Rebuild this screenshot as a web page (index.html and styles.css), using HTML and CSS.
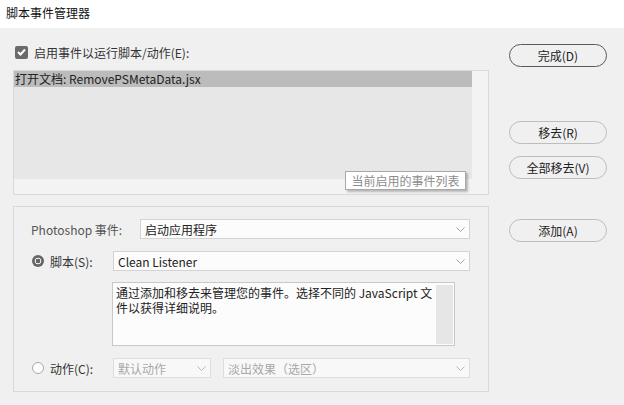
FILE: index.html
```html
<!DOCTYPE html>
<html lang="zh-CN">
<head>
  <meta charset="UTF-8">
  <title>脚本事件管理器</title>
  <link rel="stylesheet" href="styles.css">
</head>
<body>
  <div class="titlebar">脚本事件管理器</div>

  <div class="main">
    <div class="left">
      <div class="check-row">
        <span class="checkbox">
          <svg width="9" height="8" viewBox="0 0 9 8"><polyline points="1,4 3.5,6.5 8,1.5" fill="none" stroke="#fff" stroke-width="2"/></svg>
        </span>
        <span>启用事件以运行脚本/动作(E):</span>
      </div>

      <div class="event-box">
        <div class="event-list">
          <div class="event-item selected">打开文档: RemovePSMetaData.jsx</div>
        </div>
        <div class="tooltip">当前启用的事件列表</div>
      </div>

      <div class="group">
        <div class="row">
          <label class="label-ps">Photoshop 事件:</label>
          <div class="select grow">
            <span>启动应用程序</span>
            <svg class="chev" width="9" height="5" viewBox="0 0 9 5"><polyline points="0.5,0.5 4.5,4.5 8.5,0.5" fill="none" stroke="#a0a0a0"/></svg>
          </div>
        </div>

        <div class="row gap-top">
          <div class="radio-label">
            <span class="radio on"></span>
            <span>脚本(S):</span>
          </div>
          <div class="select grow">
            <span>Clean Listener</span>
            <svg class="chev" width="9" height="5" viewBox="0 0 9 5"><polyline points="0.5,0.5 4.5,4.5 8.5,0.5" fill="none" stroke="#a0a0a0"/></svg>
          </div>
        </div>

        <div class="desc">
          <p>通过添加和移去来管理您的事件。选择不同的 JavaScript 文<br>件以获得详细说明。</p>
          <div class="desc-scroll"></div>
        </div>

        <div class="row gap-top">
          <div class="radio-label">
            <span class="radio"></span>
            <span>动作(C):</span>
          </div>
          <div class="select disabled small">
            <span>默认动作</span>
            <svg class="chev" width="9" height="5" viewBox="0 0 9 5"><polyline points="0.5,0.5 4.5,4.5 8.5,0.5" fill="none" stroke="#b8b8b8"/></svg>
          </div>
          <div class="select disabled grow second">
            <span>淡出效果（选区）</span>
            <svg class="chev" width="9" height="5" viewBox="0 0 9 5"><polyline points="0.5,0.5 4.5,4.5 8.5,0.5" fill="none" stroke="#b8b8b8"/></svg>
          </div>
        </div>
      </div>
    </div>

    <div class="right">
      <button class="btn primary">完成(D)</button>
      <button class="btn b-remove">移去(R)</button>
      <button class="btn b-all">全部移去(V)</button>
      <button class="btn b-add">添加(A)</button>
    </div>
  </div>
</body>
</html>
```

FILE: styles.css
```css
body {
  margin: 0;
  background-color: #f0f0f0;
  font-family: "Noto Sans CJK SC", "Noto Sans", sans-serif;
  font-size: 12px;
  color: #222;
}

.titlebar {
  height: 28px;
  line-height: 26px;
  padding-left: 6px;
  background-color: #fff;
  color: #111;
}

.main {
  display: flex;
  padding-left: 13px;
}

.left {
  width: 476px;
}

/* top checkbox */
.check-row {
  display: flex;
  align-items: center;
  height: 20px;
  margin-top: 14px;
  padding-left: 2px;
  color: #333;
}

.checkbox {
  display: flex;
  align-items: center;
  justify-content: center;
  width: 13px;
  height: 13px;
  border-radius: 2px;
  background-color: #6a6a6a;
  margin-right: 6px;
}

/* event list */
.event-box {
  position: relative;
  height: 123px;
  margin-top: 8px;
  border: 1px solid #d9d9d9;
  background-color: #f3f3f3;
}

.event-list {
  width: 458px;
  height: 108px;
  background-color: #e7e7e7;
}

.event-item {
  height: 16px;
  line-height: 16px;
  padding-left: 1px;
  color: #222;
}

.event-item.selected {
  background-color: #bcbcbc;
}

.tooltip {
  position: absolute;
  left: 331px;
  top: 100px;
  width: 119px;
  height: 17px;
  line-height: 17px;
  text-align: center;
  background-color: #fff;
  border: 1px solid #a8a8a8;
  color: #8c8c8c;
  box-shadow: 2px 2px 2px rgba(0, 0, 0, 0.25);
}

/* lower group */
.group {
  margin-top: 11px;
  height: 172px;
  padding: 12px 18px 0 17px;
  border: 1px solid #d9d9d9;
}

.row {
  display: flex;
  align-items: center;
  height: 20px;
}

.gap-top {
  margin-top: 12px;
}

.label-ps {
  width: 109px;
  flex-shrink: 0;
  color: #555;
}

.radio-label {
  display: flex;
  align-items: center;
  width: 82px;
  flex-shrink: 0;
  color: #333;
}

.radio {
  box-sizing: border-box;
  width: 12px;
  height: 12px;
  margin-left: 1px;
  margin-right: 6px;
  border-radius: 50%;
  border: 1px solid #a9a9a9;
  background-color: #fff;
}

.radio.on {
  border: none;
  background: radial-gradient(circle, #666 0 2.2px, #f4f4f4 2.6px 3.2px, #666 3.6px);
}

.select {
  box-sizing: border-box;
  display: flex;
  align-items: center;
  justify-content: space-between;
  height: 20px;
  padding: 0 4px 0 4px;
  background-color: #fcfcfc;
  border: 1px solid #d3d3d3;
  color: #222;
}

.select.grow {
  flex: 1;
}

.select.small {
  width: 98px;
}

.select.second {
  margin-left: 12px;
}

.select.disabled {
  background-color: #f8f8f8;
  border-color: #dddddd;
  color: #a8a8a8;
}

.chev {
  margin-top: 1px;
}

.desc {
  box-sizing: border-box;
  display: flex;
  justify-content: space-between;
  width: 343px;
  height: 64px;
  margin-top: 11px;
  margin-left: 81px;
  padding: 2px 1px 1px 3px;
  background-color: #fcfcfc;
  border: 1px solid #c8c8c8;
}

.desc p {
  margin: 0;
  width: 318px;
  line-height: 15px;
  color: #222;
  white-space: nowrap;
}

.desc-scroll {
  width: 17px;
  height: 59px;
  background-color: #e6e6e6;
}

/* buttons */
.right {
  display: flex;
  flex-direction: column;
  margin-left: 20px;
  width: 98px;
}

.btn {
  height: 23px;
  padding: 0;
  border: 1px solid #bdbdbd;
  border-radius: 12px;
  background-color: #f0f0f0;
  font-family: inherit;
  font-size: 12px;
  color: #222;
}

.btn.primary {
  margin-top: 16px;
  border-color: #5a5a5a;
}

.b-remove {
  margin-top: 54px;
}

.b-all {
  margin-top: 12px;
}

.b-add {
  margin-top: 40px;
}
```
